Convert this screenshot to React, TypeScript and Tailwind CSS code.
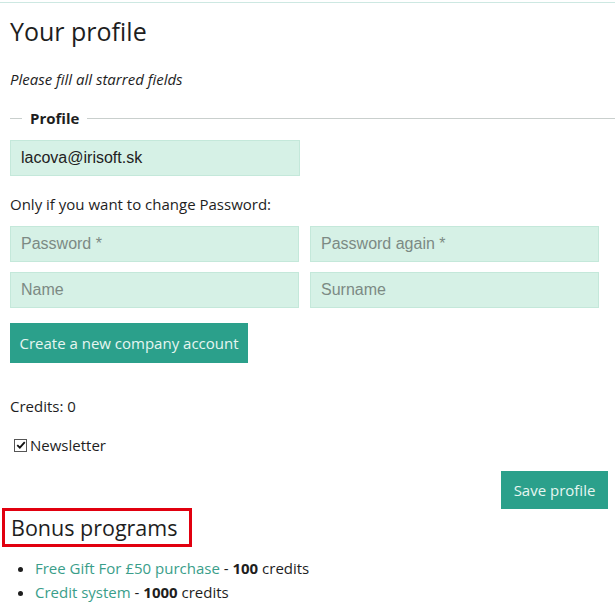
import React from 'react'

const inputCls =
  "h-[36px] w-full bg-[#d6f1e6] border border-[#c4e8da] px-[10px] text-[16px] text-[#222] placeholder:text-[#7c8a84] font-['Liberation_Sans',Arial,sans-serif] outline-none"

const bonus = [
  { name: 'Free Gift For £50 purchase', credits: 100 },
  { name: 'Credit system', credits: 1000 },
]

export default function App() {
  return (
    <div className="w-[615px] h-[605px] overflow-hidden bg-white font-['Open_Sans',sans-serif] text-[#1e1e1e]">
      <div className="mt-[2px] border-t border-[#cde8e2]" />
      <div className="px-[10px]">
        <h1 className="mt-[11px] text-[25px] leading-[34px]">Your profile</h1>
        <p className="mt-[21px] text-[15px] leading-[20px] italic">Please fill all starred fields</p>

        <div className="mt-[19px] flex items-center">
          <div className="w-[12px] border-t border-[#c9cfcd]" />
          <span className="px-[8px] text-[15px] leading-[20px] font-bold">Profile</span>
          <div className="flex-1 -mr-[10px] border-t border-[#c9cfcd]" />
        </div>

        <div className="mt-[12px] w-[290px]">
          <input className={inputCls} defaultValue="lacova@irisoft.sk" />
        </div>

        <p className="mt-[18px] text-[15px] leading-[20px]">Only if you want to change Password:</p>

        <div className="mt-[12px] grid grid-cols-2 gap-x-[11px] gap-y-[10px] w-[589px]">
          <input className={inputCls} placeholder="Password *" type="text" />
          <input className={inputCls} placeholder="Password again *" type="text" />
          <input className={inputCls} placeholder="Name" />
          <input className={inputCls} placeholder="Surname" />
        </div>

        <button className="mt-[15px] h-[40px] w-[238px] bg-[#2ba08b] text-[#e6f6f1] text-[15px] whitespace-nowrap">
          Create a new company account
        </button>

        <p className="mt-[33px] text-[15px] leading-[20px]">Credits: 0</p>

        <label className="mt-[19px] ml-[4px] flex items-center gap-[3px] text-[15px] leading-[20px]">
          <span className="w-[13px] h-[13px] border border-[#555] bg-white flex items-center justify-center">
            <svg viewBox="0 0 12 12" className="w-[10px] h-[10px]">
              <path d="M1.5 6.2 L4.6 9.2 L10.5 2.6" fill="none" stroke="#111" strokeWidth="2.2" />
            </svg>
          </span>
          Newsletter
        </label>

        <div className="mt-[16px] flex justify-end -mr-[3px]">
          <button className="h-[38px] w-[107px] bg-[#2ba08b] text-[#e6f6f1] text-[15px] whitespace-nowrap">Save profile</button>
        </div>
      </div>

      <div className="-mt-[1px] ml-[2px] w-[190px] h-[39px] border-[3px] border-[#e1000f] flex items-center pl-[6px]">
        <h2 className="text-[21.5px] leading-[28px] whitespace-nowrap">Bonus programs</h2>
      </div>

      <ul className="mt-[9px] pl-[35px] list-disc text-[15px] leading-[24px]">
        {bonus.map(b => (
          <li key={b.name}>
            <a className="text-[#3a9e8a]">{b.name}</a> - <b>{b.credits}</b> credits
          </li>
        ))}
      </ul>
    </div>
  )
}
